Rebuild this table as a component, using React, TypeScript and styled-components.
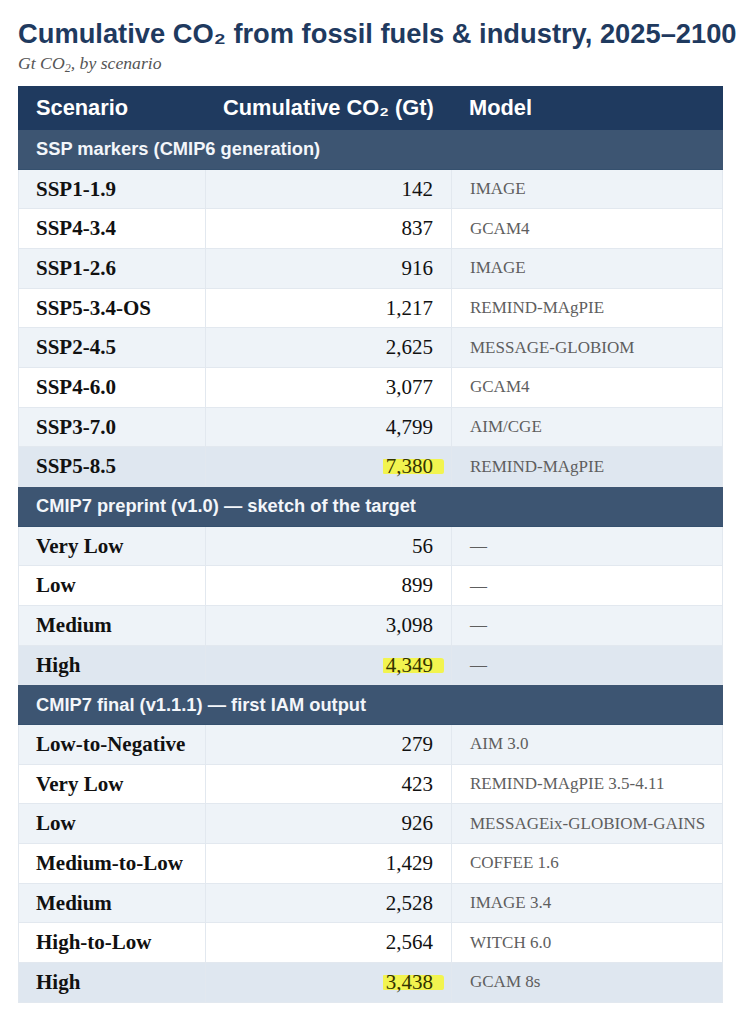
import React from "react";
import styled, { createGlobalStyle } from "styled-components";

const Global = createGlobalStyle`
  html, body { margin: 0; padding: 0; background: #ffffff; }
  body { font-family: "Liberation Serif", "Times New Roman", serif; }
`;

const Page = styled.div`
  padding: 16px 24px 0 18px;
  width: 705px;
`;

const Title = styled.h1`
  margin: 0;
  font-family: "Liberation Sans", Arial, "DejaVu Sans", sans-serif;
  font-weight: 700;
  font-size: 27.3px;
  line-height: 36px;
  color: #1f3a5f;
  white-space: nowrap;
`;

const Subtitle = styled.div`
  margin: 0 0 12px 0;
  font-family: "Liberation Serif", "Times New Roman", serif;
  font-style: italic;
  font-size: 17.7px;
  line-height: 22px;
  color: #555555;
  sub { font-size: 12px; vertical-align: -3px; line-height: 0; }
`;

const Table = styled.div`
  width: 705px;
  display: flex;
  flex-direction: column;
`;

const cols = "187px 246px 272px";

const HeadRow = styled.div`
  display: grid;
  grid-template-columns: ${cols};
  height: 44px;
  background: #1f3a5f;
  align-items: center;
`;

const HeadCell = styled.div`
  padding: 0 18px;
  font-family: "Liberation Sans", Arial, "DejaVu Sans", sans-serif;
  font-weight: 700;
  font-size: 21.8px;
  color: #ffffff;
  white-space: nowrap;
`;

const GroupRow = styled.div`
  height: 39.68px;
  box-sizing: border-box;
  display: flex;
  align-items: center;
  padding: 0 18px;
  background: #3d5572;
  font-family: "Liberation Sans", Arial, "DejaVu Sans", sans-serif;
  font-weight: 700;
  font-size: 18.3px;
  color: #f3f6fa;
  border-bottom: 1px solid #35506e;
`;

const Row = styled.div<{ $tone: "odd" | "even" | "hot" }>`
  display: grid;
  grid-template-columns: ${cols};
  height: 39.68px;
  box-sizing: border-box;
  background: ${(p) =>
    p.$tone === "hot" ? "#dfe7f0" : p.$tone === "odd" ? "#eef3f8" : "#ffffff"};
  border-bottom: 1px solid #e2e8ef;
  border-left: 1px solid #e2e8ef;
  border-right: 1px solid #e2e8ef;
`;

const Cell = styled.div<{ $kind: "name" | "num" | "model" }>`
  display: flex;
  align-items: center;
  padding: 0 18px;
  white-space: nowrap;
  justify-content: ${(p) => (p.$kind === "num" ? "flex-end" : "flex-start")};
  border-right: ${(p) => (p.$kind === "model" ? "none" : "1px solid #e2e8ef")};
  font-family: "Liberation Serif", "Times New Roman", serif;
  font-size: ${(p) => (p.$kind === "model" ? "17px" : "21px")};
  font-weight: ${(p) => (p.$kind === "name" ? 700 : 400)};
  color: ${(p) => (p.$kind === "model" ? "#5e5e5e" : "#111111")};
  padding-left: ${(p) => (p.$kind === "name" ? "17px" : "18px")};
`;

const Mark = styled.span`
  background: rgba(250, 250, 10, 0.7);
  padding: 0 11px 0 3px;
  margin-right: -11px;
  line-height: 15px;
  display: inline-block;
  height: 15px;
  border-radius: 1px 3px 2px 1px;
  color: #333300;
`;

type R = { name: string; value: string; model: string; hot?: boolean };
type G = { title: string; rows: R[] };

const groups: G[] = [
  {
    title: "SSP markers (CMIP6 generation)",
    rows: [
      { name: "SSP1-1.9", value: "142", model: "IMAGE" },
      { name: "SSP4-3.4", value: "837", model: "GCAM4" },
      { name: "SSP1-2.6", value: "916", model: "IMAGE" },
      { name: "SSP5-3.4-OS", value: "1,217", model: "REMIND-MAgPIE" },
      { name: "SSP2-4.5", value: "2,625", model: "MESSAGE-GLOBIOM" },
      { name: "SSP4-6.0", value: "3,077", model: "GCAM4" },
      { name: "SSP3-7.0", value: "4,799", model: "AIM/CGE" },
      { name: "SSP5-8.5", value: "7,380", model: "REMIND-MAgPIE", hot: true },
    ],
  },
  {
    title: "CMIP7 preprint (v1.0) — sketch of the target",
    rows: [
      { name: "Very Low", value: "56", model: "—" },
      { name: "Low", value: "899", model: "—" },
      { name: "Medium", value: "3,098", model: "—" },
      { name: "High", value: "4,349", model: "—", hot: true },
    ],
  },
  {
    title: "CMIP7 final (v1.1.1) — first IAM output",
    rows: [
      { name: "Low-to-Negative", value: "279", model: "AIM 3.0" },
      { name: "Very Low", value: "423", model: "REMIND-MAgPIE 3.5-4.11" },
      { name: "Low", value: "926", model: "MESSAGEix-GLOBIOM-GAINS" },
      { name: "Medium-to-Low", value: "1,429", model: "COFFEE 1.6" },
      { name: "Medium", value: "2,528", model: "IMAGE 3.4" },
      { name: "High-to-Low", value: "2,564", model: "WITCH 6.0" },
      { name: "High", value: "3,438", model: "GCAM 8s", hot: true },
    ],
  },
];

export default function App() {
  return (
    <>
      <Global />
      <Page>
        <Title>Cumulative CO₂ from fossil fuels &amp; industry, 2025–2100</Title>
        <Subtitle>
          Gt CO<sub>2</sub>, by scenario
        </Subtitle>
        <Table>
          <HeadRow>
            <HeadCell>Scenario</HeadCell>
            <HeadCell>Cumulative CO₂ (Gt)</HeadCell>
            <HeadCell>Model</HeadCell>
          </HeadRow>
          {groups.map((g) => (
            <React.Fragment key={g.title}>
              <GroupRow>{g.title}</GroupRow>
              {g.rows.map((r, i) => (
                <Row
                  key={g.title + r.name}
                  $tone={r.hot ? "hot" : i % 2 === 0 ? "odd" : "even"}
                >
                  <Cell $kind="name">{r.name}</Cell>
                  <Cell $kind="num">{r.hot ? <Mark>{r.value}</Mark> : r.value}</Cell>
                  <Cell $kind="model">{r.model}</Cell>
                </Row>
              ))}
            </React.Fragment>
          ))}
        </Table>
      </Page>
    </>
  );
}
